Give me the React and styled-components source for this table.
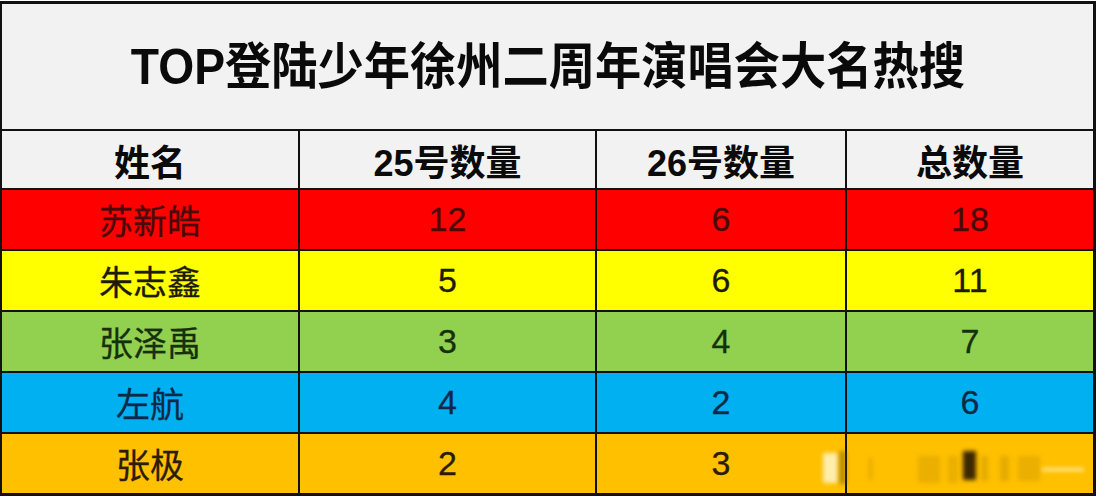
import { Fragment } from "react";
import styled, { createGlobalStyle } from "styled-components";

const GlobalStyle = createGlobalStyle`
  html, body {
    margin: 0;
    padding: 0;
    background: #ffffff;
  }
  body {
    font-family: "Liberation Sans", "Noto Sans CJK SC", sans-serif;
  }
`;

const Page = styled.div`
  position: relative;
  width: 1098px;
  height: 496px;
  padding-top: 1px;
  box-sizing: border-box;
  overflow: hidden;
`;

const Table = styled.div`
  width: 1096px;
  box-sizing: border-box;
  border: 3px solid #111;
  border-left-width: 2px;
  background: #111;
`;

const Title = styled.div`
  height: 125px;
  background: #f2f2f2;
  display: flex;
  align-items: center;
  justify-content: center;
  border-bottom: 2px solid #111;
`;

const TitleText = styled.span`
  display: inline-block;
  font-size: 50px;
  font-weight: 700;
  color: #0a0a0a;
  transform: scaleX(0.925);
  white-space: nowrap;
  line-height: 1;
`;

const Grid = styled.div`
  display: grid;
  grid-template-columns: 296px 295px 248px 1fr;
  column-gap: 2px;
  row-gap: 2px;
`;

const HeadCell = styled.div`
  height: 57px;
  background: #f2f2f2;
  display: flex;
  align-items: center;
  justify-content: center;
  font-size: 36px;
  font-weight: 700;
  color: #0a0a0a;
  white-space: nowrap;
`;

const Cell = styled.div`
  height: 59px;
  background: ${(p) => p.$bg};
  display: flex;
  align-items: center;
  justify-content: center;
  font-size: 34px;
  font-weight: 400;
  color: ${(p) => p.$ink};
  white-space: nowrap;
  -webkit-text-stroke: 0.3px ${(p) => p.$ink};
`;

const Mark = styled.div`
  position: absolute;
  filter: blur(2px);
`;

const rows = [
  { name: "苏新皓", a: 12, b: 6, total: 18, bg: "#fe0000", ink: "#4a0808" },
  { name: "朱志鑫", a: 5, b: 6, total: 11, bg: "#ffff00", ink: "#1c1c05" },
  { name: "张泽禹", a: 3, b: 4, total: 7, bg: "#92d050", ink: "#17300c" },
  { name: "左航", a: 4, b: 2, total: 6, bg: "#00b0f0", ink: "#0c2a48" },
  { name: "张极", a: 2, b: 3, total: "", bg: "#ffc000", ink: "#2c1c02" },
];

const marks = [
  { left: 823, top: 453, w: 15, h: 30, bg: "rgba(255,248,215,0.8)" },
  { left: 839, top: 451, w: 7, h: 33, bg: "rgba(110,80,0,0.45)" },
  { left: 869, top: 458, w: 3, h: 22, bg: "rgba(140,100,0,0.25)" },
  { left: 918, top: 456, w: 22, h: 27, bg: "rgba(150,110,0,0.2)" },
  { left: 948, top: 456, w: 10, h: 27, bg: "rgba(150,110,0,0.2)" },
  { left: 963, top: 451, w: 13, h: 29, bg: "rgba(25,12,0,0.85)" },
  { left: 981, top: 456, w: 7, h: 25, bg: "rgba(150,110,0,0.25)" },
  { left: 1000, top: 456, w: 9, h: 25, bg: "rgba(150,110,0,0.25)" },
  { left: 1018, top: 456, w: 22, h: 25, bg: "rgba(150,110,0,0.2)" },
  { left: 1042, top: 468, w: 42, h: 3, bg: "rgba(255,248,225,0.75)" },
];

export default function App() {
  return (
    <>
      <GlobalStyle />
      <Page>
        <Table>
          <Title>
            <TitleText>TOP登陆少年徐州二周年演唱会大名热搜</TitleText>
          </Title>
          <Grid>
            <HeadCell>姓名</HeadCell>
            <HeadCell>25号数量</HeadCell>
            <HeadCell>26号数量</HeadCell>
            <HeadCell>总数量</HeadCell>
            {rows.map((r) => (
              <Fragment key={r.name}>
                <Cell $bg={r.bg} $ink={r.ink}>{r.name}</Cell>
                <Cell $bg={r.bg} $ink={r.ink}>{r.a}</Cell>
                <Cell $bg={r.bg} $ink={r.ink}>{r.b}</Cell>
                <Cell $bg={r.bg} $ink={r.ink}>{r.total}</Cell>
              </Fragment>
            ))}
          </Grid>
        </Table>
        {marks.map((m, i) => (
          <Mark
            key={i}
            style={{ left: m.left, top: m.top, width: m.w, height: m.h, background: m.bg }}
          />
        ))}
      </Page>
    </>
  );
}
